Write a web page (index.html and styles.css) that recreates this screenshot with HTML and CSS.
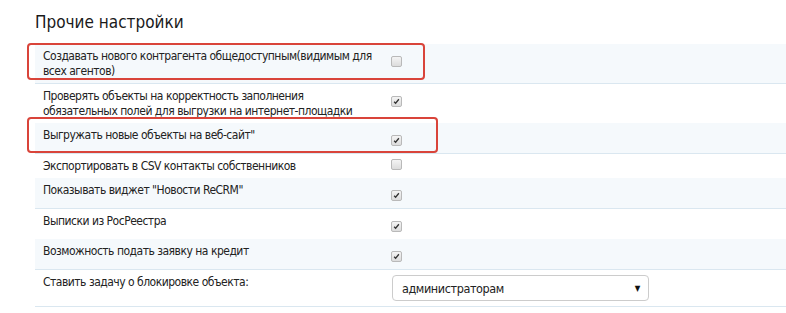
FILE: index.html
```html
<!DOCTYPE html>
<html lang="ru">
<head>
    <meta charset="UTF-8" />
    <title>Прочие настройки</title>
    <link rel="stylesheet" href="styles.css">
</head>
<body>
    <div class="page">
        <h2>Прочие настройки</h2>
        <table class="settings">
            <tr class="striped">
                <td class="label">Создавать нового контрагента общедоступным(видимым для всех агентов)</td>
                <td class="value"><span class="cb"></span></td>
            </tr>
            <tr>
                <td class="label">Проверять объекты на корректность заполнения обязательных полей для выгрузки на интернет-площадки</td>
                <td class="value"><span class="cb checked"><svg viewBox="0 0 11 11"><path d="M2.6 5.8 L4.4 7.6 L8.4 2.8" /></svg></span></td>
            </tr>
            <tr class="striped">
                <td class="label">Выгружать новые объекты на веб-сайт"</td>
                <td class="value"><span class="cb checked"><svg viewBox="0 0 11 11"><path d="M2.6 5.8 L4.4 7.6 L8.4 2.8" /></svg></span></td>
            </tr>
            <tr>
                <td class="label">Экспортировать в CSV контакты собственников</td>
                <td class="value compact"><span class="cb"></span></td>
            </tr>
            <tr class="striped">
                <td class="label">Показывать виджет "Новости ReCRM"</td>
                <td class="value"><span class="cb checked"><svg viewBox="0 0 11 11"><path d="M2.6 5.8 L4.4 7.6 L8.4 2.8" /></svg></span></td>
            </tr>
            <tr>
                <td class="label">Выписки из РосРеестра</td>
                <td class="value"><span class="cb checked"><svg viewBox="0 0 11 11"><path d="M2.6 5.8 L4.4 7.6 L8.4 2.8" /></svg></span></td>
            </tr>
            <tr class="striped">
                <td class="label">Возможность подать заявку на кредит</td>
                <td class="value"><span class="cb checked"><svg viewBox="0 0 11 11"><path d="M2.6 5.8 L4.4 7.6 L8.4 2.8" /></svg></span></td>
            </tr>
            <tr class="last">
                <td class="label">Ставить задачу о блокировке объекта:</td>
                <td class="value select-cell">
                    <div class="select">
                        <span>администраторам</span>
                        <span class="arrow">&#9660;</span>
                    </div>
                </td>
            </tr>
        </table>

        <div class="mark mark-1"></div>
        <div class="mark mark-2"></div>
    </div>
</body>
</html>
```

FILE: styles.css
```css
body {
    margin: 0;
    background: #fff;
    font-family: "DejaVu Sans Condensed", "DejaVu Sans", sans-serif;
    font-stretch: condensed;
    color: #222;
}
.page {
    position: relative;
    padding: 12px 0 0 35px;
}
h2 {
    margin: 0 0 11px 0;
    font-size: 17px;
    font-weight: normal;
    line-height: 21px;
    color: #1a1a1a;
}
.settings {
    width: 100%;
    border-collapse: collapse;
    font-size: 12px;
    line-height: 15px;
    letter-spacing: -0.5px;
}
.settings td {
    padding: 5px 8px 4px 8px;
    vertical-align: top;
}
.settings tr.striped td {
    background: #f5f9fc;
    border-bottom: 1px solid #dae7f0;
}
.settings tr.last td {
    border-bottom: 1px solid #dae7f0;
}
.settings td.label {
    width: 332px;
}
.settings td.value {
    padding: 12px 0 7px 8px;
}
.settings td.value.compact {
    padding-top: 5px;
}
.settings td.select-cell {
    padding: 5px 0 5px 9px;
}
.cb {
    display: block;
    width: 9px;
    height: 9px;
    border: 1px solid #b9b9b9;
    border-radius: 2px;
    background: linear-gradient(#f4f4f4, #dcdcdc);
}
.cb svg {
    display: block;
    width: 9px;
    height: 9px;
}
.cb path {
    fill: none;
    stroke: #333;
    stroke-width: 1.6;
}
.select {
    width: 238px;
    height: 24px;
    border: 1px solid #ccc;
    border-radius: 4px;
    background: #fff;
    display: flex;
    align-items: center;
    justify-content: space-between;
    padding: 0 8px 0 9px;
    font-size: 12.5px;
    letter-spacing: -0.4px;
    color: #222;
}
.arrow {
    font-size: 8px;
    color: #111;
}
.mark {
    position: absolute;
    border: 2px solid #d9443a;
    border-radius: 4px;
}
.mark-1 {
    left: 27px;
    top: 43px;
    width: 394px;
    height: 33px;
}
.mark-2 {
    left: 27px;
    top: 117px;
    width: 407px;
    height: 32px;
}
```
